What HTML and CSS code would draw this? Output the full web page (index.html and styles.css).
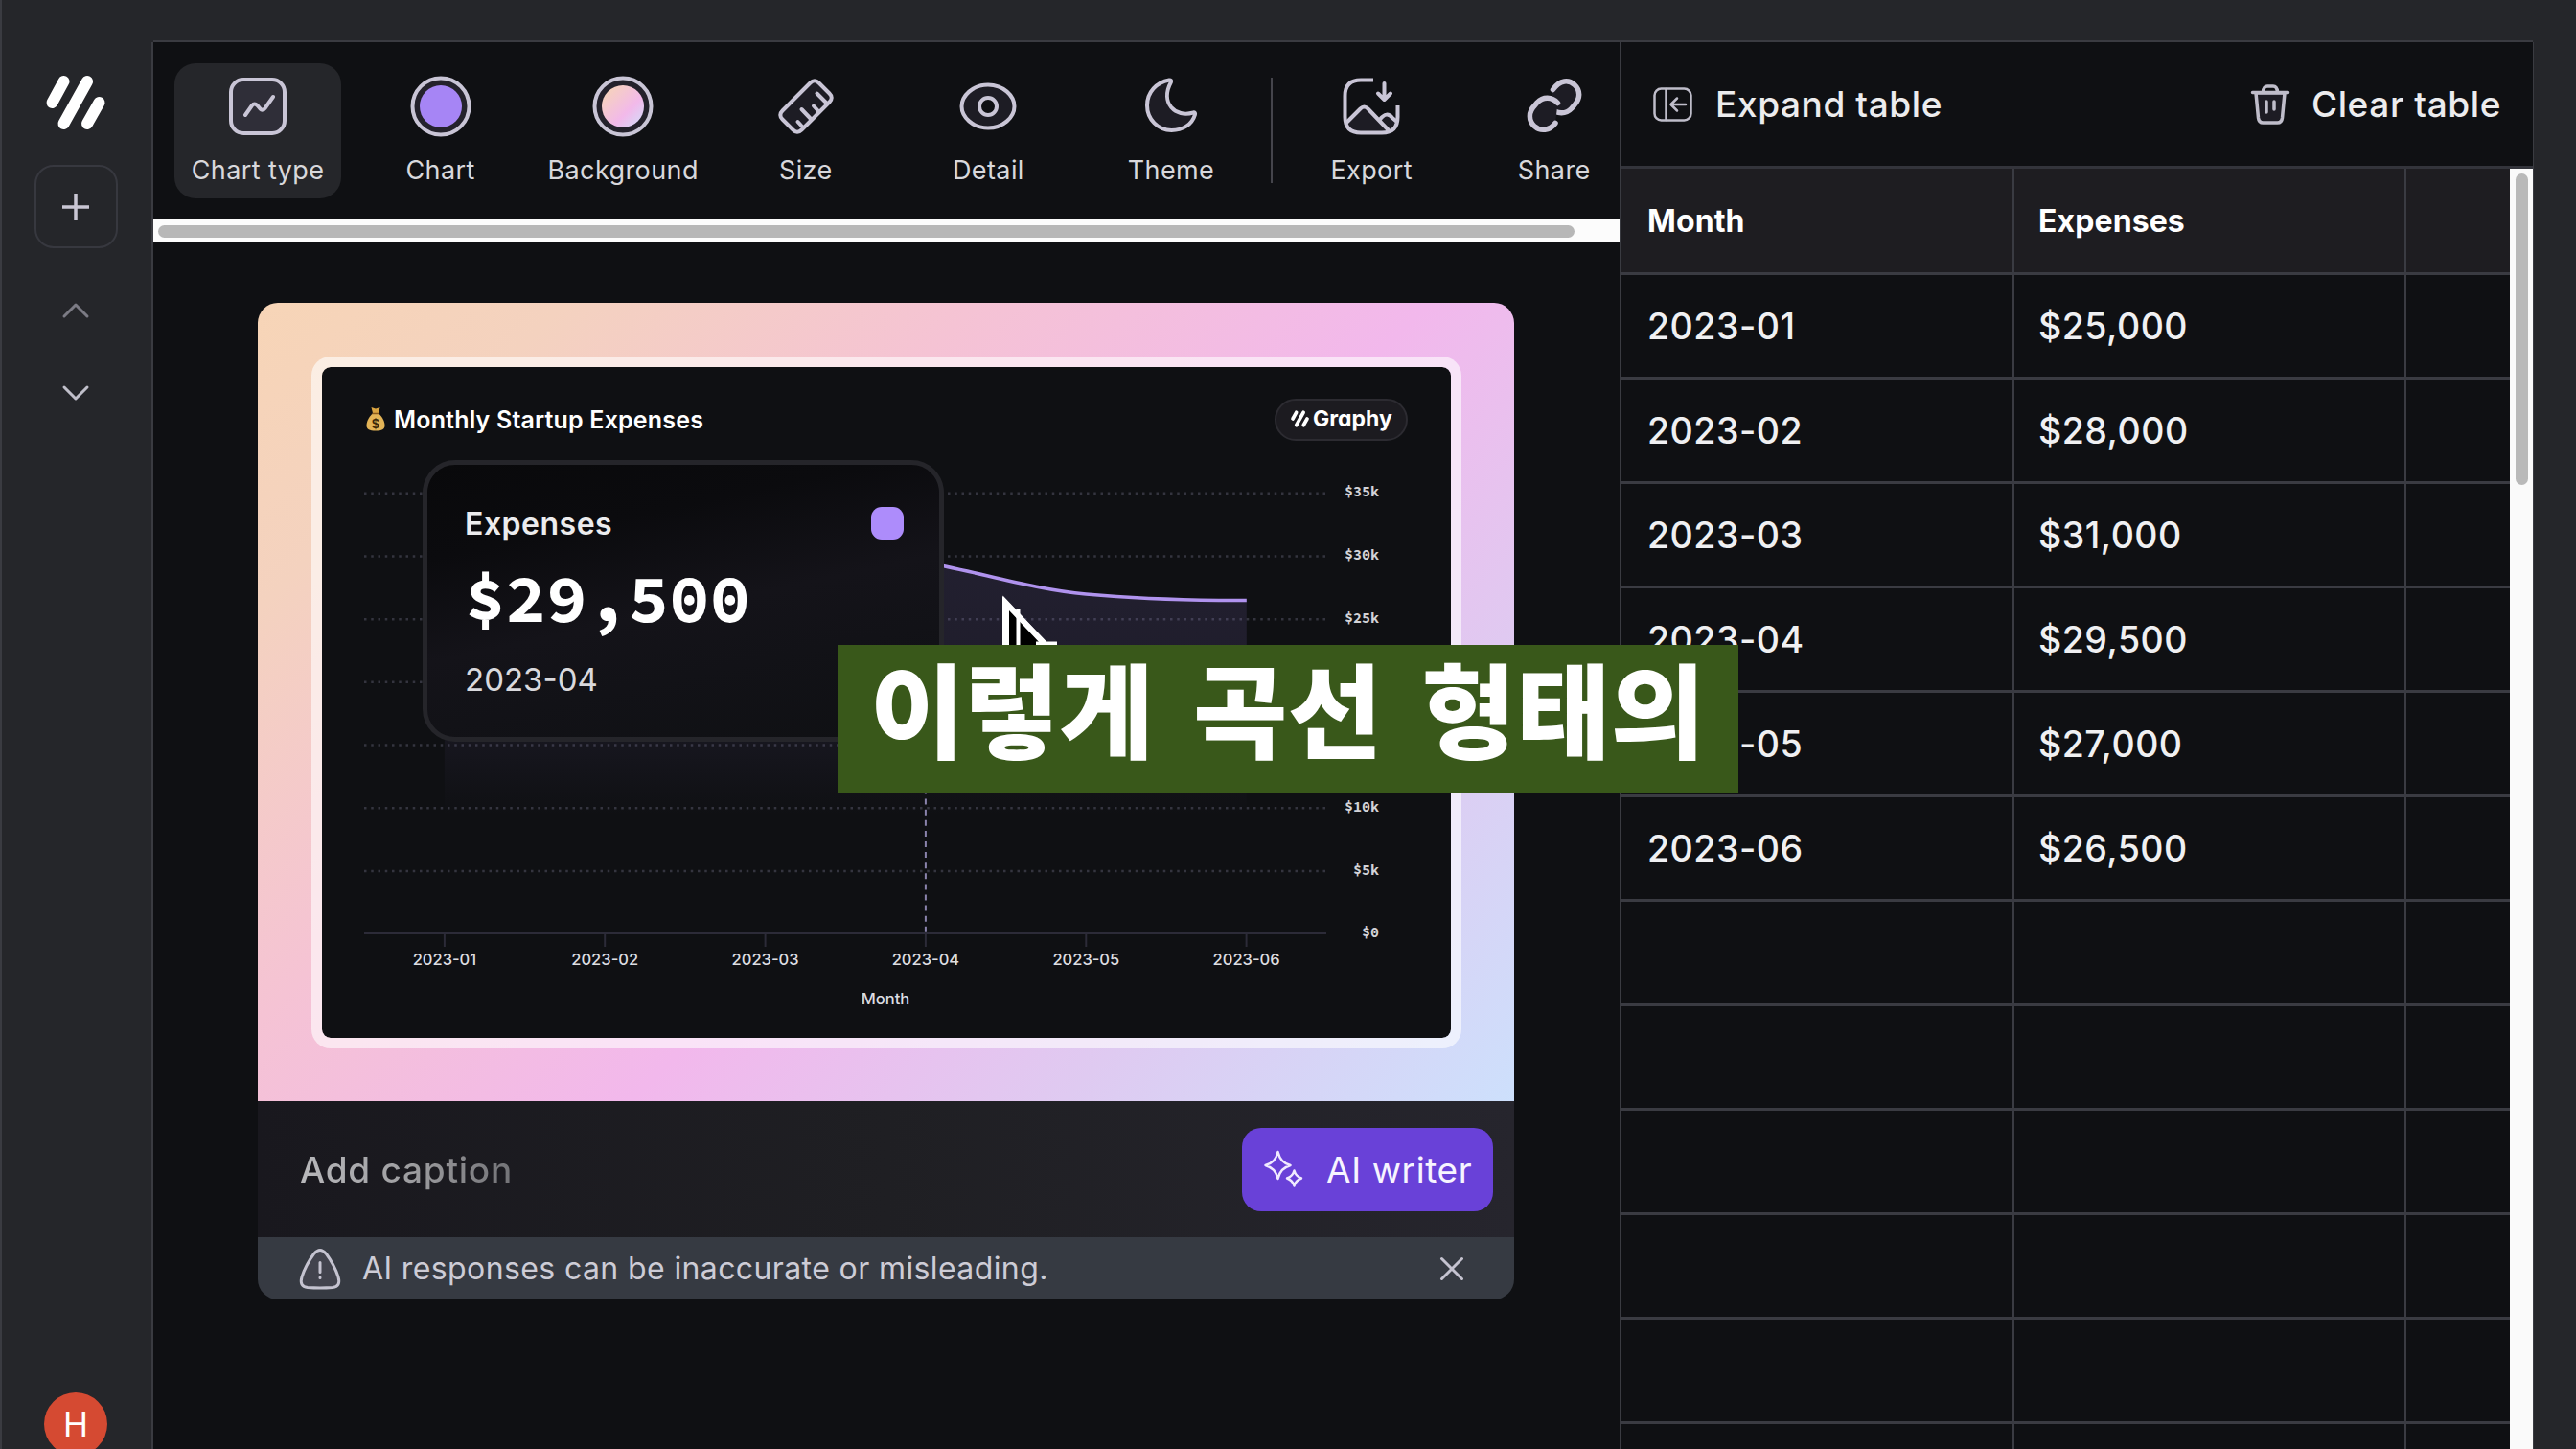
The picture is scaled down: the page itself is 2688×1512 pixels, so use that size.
FILE: index.html
```html
<!DOCTYPE html>
<html lang="en">
<head>
<meta charset="utf-8">
<title>Graphy</title>
<link rel="stylesheet" href="styles.css">
</head>
<body>
<div class="app">
  <nav class="sidebar">
    <svg class="logo" viewBox="0 0 62 58" width="62" height="58"><g stroke="#fff" stroke-width="12" stroke-linecap="round"><path d="M18.500 6 6.500 28"/><path d="M43 6 18.500 50"/><path d="M55.500 28 43 50"/></g></svg>
    <button class="add"><svg viewBox="0 0 30 30" width="30" height="30"><path d="M15 1v28M1 15h28"/></svg></button>
    <svg class="chev chev-up" viewBox="0 0 28 16" width="28" height="16"><path d="M2 14 14 2l12 12"/></svg>
    <svg class="chev chev-down" viewBox="0 0 28 16" width="28" height="16"><path d="M2 2l12 12L26 2"/></svg>
    <div class="avatar"><span>H</span></div>
  </nav>

  <main class="editor">
    <div class="toolbar">
      <button class="tool active">
        <svg viewBox="0 0 64 64" width="64" height="64"><rect x="4" y="4" width="56" height="56" rx="13" fill="#2f2e38"/><path d="M19 41l7-10q2.500-3 5.500 0l3 3.500q2.500 2.500 5-.5L48 22"/></svg>
        <span>Chart type</span>
      </button>
      <button class="tool">
        <svg viewBox="0 0 64 64" width="64" height="64"><circle cx="32" cy="32" r="29.500" fill="#24222c"/><circle cx="32" cy="32" r="22" fill="#a685f5" stroke="none"/></svg>
        <span>Chart</span>
      </button>
      <button class="tool">
        <svg viewBox="0 0 64 64" width="64" height="64"><defs><linearGradient id="sw" x1="0" y1="0" x2="1" y2="1"><stop offset=".1" stop-color="#f6d3bb"/><stop offset=".62" stop-color="#f2b9ea"/><stop offset="1" stop-color="#cfe0fb"/></linearGradient></defs><circle cx="32" cy="32" r="29.500" fill="#24222c"/><circle cx="32" cy="32" r="22" fill="url(#sw)" stroke="none"/></svg>
        <span>Background</span>
      </button>
      <button class="tool">
        <svg viewBox="0 0 64 64" width="64" height="64"><path fill="#1d1c24" d="M36.500 7.500 7.500 36.500q-4.500 4.500 0 9L18.500 56.500q4.500 4.500 9 0l29-29q4.500-4.500 0-9L45.500 7.500q-4.500-4.500-9 0z"/><path d="M29 54l-5.500-6M37.500 45.500l-10-10.500M45.500 37.500l-5.500-6M54 29 43.500 18.500"/></svg>
        <span>Size</span>
      </button>
      <button class="tool">
        <svg viewBox="0 0 64 64" width="64" height="64"><path fill="#1d1c24" d="M32 9.500C48 9.500 59.500 21 59.500 32S48 54.500 32 54.500 4.500 43 4.500 32 16 9.500 32 9.500z"/><circle cx="32" cy="32" r="9" fill="#0f1013"/></svg>
        <span>Detail</span>
      </button>
      <button class="tool">
        <svg viewBox="0 0 64 64" width="64" height="64"><path fill="#1d1c24" d="M30 4.500C17 7 7 17 7 31c0 14.500 11.500 26 25.500 26C44 57 54 51 57 40.500c.5-1.500-.5-2.500-2-2C37 44 20 29 32 6.500c.7-1.300-.3-2.300-2-2z"/></svg>
        <span>Theme</span>
      </button>
      <i class="divider"></i>
      <button class="tool">
        <svg viewBox="0 0 64 64" width="64" height="64"><path fill="#1d1c24" stroke="none" d="M5 48 20 34q3-3 6 0L50 59H20q-11 0-15-11zM41 44q6-8 12 0l5 4-8 9z"/><path stroke-linecap="butt" d="M34 4.500H21Q4.500 4.500 4.500 21v22Q4.500 59.500 21 59.500h22Q59.500 59.500 59.500 43V31"/><path d="M7 48 20.500 34.500q4-4 8 0L50 57M41 45.500q7-9 13-1.500l3.500 3M45.500 8v16M39 18.500l6.500 6.500 6.500-6.500"/></svg>
        <span>Export</span>
      </button>
      <button class="tool">
        <svg class="thick" viewBox="0 0 64 64" width="64" height="64"><path fill="#1d1c24" d="M30.500 14.500C38 4 47 4 53 9.500c6.500 6 6 14.500 0 21l-3 3.500c-6 6.500-15.500 6.500-21.500-.5"/><path fill="#1d1c24" d="M35.500 28.500c-6-7-15.500-7-21.500-.5l-2.500 3c-7 7-6.500 15.500-.5 21.500 6.500 6 16 5 22-3"/></svg>
        <span>Share</span>
      </button>
    </div>
    <div class="hscroll"><i></i></div>

    <section class="card">
      <div class="canvas">
        <div class="chart">
          <header class="chart-head">
            <svg class="bag" viewBox="0 0 20 26" width="20" height="26"><path fill="#d9a441" d="M5.500 1 10 2.500 14.500 1 13 7H7z"/><path fill="#e3b457" d="M7 7.500h6c4 3.500 6.500 8 6.500 12.500 0 4-3 5.500-9.500 5.500S.5 24 .5 20C.5 15.500 3 11 7 7.500z"/><path stroke="#8a5a1c" stroke-width="1.600" d="M6.500 7.500h7"/><text x="10" y="22.500" text-anchor="middle">$</text></svg>
            <h1>Monthly Startup Expenses</h1>
            <div class="brand"><svg viewBox="0 0 62 58" width="19" height="18"><g stroke="#fff" stroke-width="12" stroke-linecap="round"><path d="M18.500 7 6.500 29"/><path d="M43 7 18.500 51"/><path d="M55.500 29 43 51"/></g></svg><span>Graphy</span></div>
          </header>
          <svg class="plot" viewBox="336 483 1178 600" width="1178" height="600">
            <defs><linearGradient id="area" x1="0" y1="0" x2="0" y2="1"><stop offset="0" stop-color="#a58af5" stop-opacity=".13"/><stop offset=".3" stop-color="#a58af5" stop-opacity=".11"/><stop offset=".62" stop-color="#a58af5" stop-opacity=".02"/><stop offset=".7" stop-color="#a58af5" stop-opacity="0"/></linearGradient></defs>
            <g class="grid"><path d="M380 514.800h1006M380 580.500h1006M380 646.200h1006M380 711.800h1006M380 777.500h1006M380 843.200h1006M380 908.900h1006"/></g>
            <path fill="url(#area)" d="M463.900 646C520 633 575 619 631 607S742 567 798.600 567 910 577 965.800 587s112 28 167.500 33 112 6.600 167.500 6.600V974H463.900z"/>
            <path class="line" d="M463.900 646C520 633 575 619 631 607S742 567 798.600 567 910 577 965.800 587s112 28 167.500 33 112 6.600 167.500 6.600"/>
            <path class="axis" d="M380 974h1004M463.900 974v14M631.200 974v14M798.600 974v14M965.900 974v14M1133.300 974v14M1300.600 974v14"/>
            <path class="marker" d="M965.900 822.500V974"/>
            <g class="xl"><text x="463.900" y="1007">2023-01</text><text x="631.200" y="1007">2023-02</text><text x="798.600" y="1007">2023-03</text><text x="965.900" y="1007">2023-04</text><text x="1133.300" y="1007">2023-05</text><text x="1300.600" y="1007">2023-06</text><text x="924" y="1048">Month</text></g>
            <g class="yl"><text x="1439" y="518">$35k</text><text x="1439" y="584">$30k</text><text x="1439" y="650">$25k</text><text x="1439" y="847">$10k</text><text x="1439" y="913">$5k</text><text x="1439" y="978">$0</text></g>
          </svg>
          <div class="tip">
            <div class="tip-head"><b>Expenses</b><i></i></div>
            <strong>$29,500</strong>
            <small>2023-04</small>
          </div>
        </div>
      </div>
      <div class="caption">
        <span class="ph">Add caption</span>
        <button class="ai"><svg viewBox="0 0 42 40" width="42" height="40"><path d="M15.500 2c2 8 5.500 11.500 13 14-7.500 2.500-11 6-13 14-2-8-5.500-11.500-13-14 7.500-2.500 11-6 13-14zM32.500 21.500c1.200 4.500 3.300 6.500 7.500 8-4.200 1.500-6.300 3.500-7.500 8-1.200-4.500-3.300-6.500-7.500-8 4.200-1.500 6.300-3.500 7.500-8z"/></svg><span>AI writer</span></button>
      </div>
      <div class="notice">
        <svg viewBox="0 0 44 44" width="44" height="44"><path fill="#42434d" d="M15.500 6.500q6.500-8 13 0Q37 18 41 30.500q3 10-6 11-13 1-26 0-9-1-6-11Q7 18 15.500 6.500z"/><path d="M22 15.500v10M22 31v.5"/></svg>
        <span>AI responses can be inaccurate or misleading.</span>
        <svg class="close" viewBox="0 0 26 26" width="26" height="26"><path d="M2.500 2.500l21 21M23.500 2.500l-21 21"/></svg>
      </div>
    </section>
  </main>

  <aside class="panel">
    <header class="panel-head">
      <svg viewBox="0 0 42 36" width="42" height="36"><rect x="1.500" y="1.500" width="38" height="33" rx="7" /><path d="M13.500 2v32M34 18H19M25 11.500 18.500 18l6.500 6.500"/></svg>
      <span>Expand table</span>
      <svg class="trash" viewBox="0 0 40 42" width="40" height="42"><path fill="#1d1c24" d="M5 9l2.500 26q.6 5 5 5h15q4.400 0 5-5L35 9z"/><path d="M1.500 8.500h37M12.500 8q.5-6 4.500-6h6q4 0 4.500 6M16 18v11M24 18v8"/></svg>
      <span>Clear table</span>
    </header>
    <div class="table-wrap">
      <div class="table">
        <div class="th">Month</div><div class="th">Expenses</div><div class="th"></div>
        <div>2023-01</div><div>$25,000</div><div></div>
        <div>2023-02</div><div>$28,000</div><div></div>
        <div>2023-03</div><div>$31,000</div><div></div>
        <div>2023-04</div><div>$29,500</div><div></div>
        <div>2023-05</div><div>$27,000</div><div></div>
        <div>2023-06</div><div>$26,500</div><div></div>
        <div></div><div></div><div></div>
        <div></div><div></div><div></div>
        <div></div><div></div><div></div>
        <div></div><div></div><div></div>
        <div></div><div></div><div></div>
        <div></div><div></div><div></div>
      </div>
      <div class="vscroll"><i></i></div>
    </div>
  </aside>
</div>
<svg class="cursor" viewBox="0 0 60 84" width="60" height="84"><path fill="#000" stroke="#fff" stroke-width="6" d="M3.500 7v70l50-17z"/><path fill="#fff" d="M0 0v80l7-9V14l50 45L0 0z"/><path stroke="#fff" stroke-width="4" d="M16.500 14v60M35 49.500h22"/></svg>
<div class="subtitle"><span lang="ko">이렇게 곡선 형태의</span></div>
</body>
</html>
```
FILE: styles.css
```css
* { box-sizing: border-box; }
body { margin: 0; width: 2688px; height: 1512px; overflow: hidden; position: relative; background: #25262a; font-family: Inter, "Noto Sans", sans-serif; color: #f2f2f4; }
button { border: 0; background: none; padding: 0; font: inherit; color: inherit; }
svg { display: block; flex: none; fill: none; overflow: visible; }
.app { display: grid; grid-template-columns: 158px 1530px 953px; height: 1512px; padding-top: 44px; border-left: 2px solid #3a3b41; }

/* sidebar */
.sidebar { display: flex; flex-direction: column; align-items: center; padding: 35px 2px 0 0; border-right: 2px solid #3a3b41; height: 1468px; overflow: hidden; }
.add { flex: none; width: 87px; height: 87px; margin-top: 35px; border: 2px solid #37383f; border-radius: 20px; display: grid; place-items: center; }
.add path { stroke: #c9c6d4; stroke-width: 3.5; }
.chev { stroke-width: 3; stroke-linecap: round; stroke-linejoin: round; }
.chev-up { margin-top: 57px; stroke: #7c7b85; }
.chev-down { margin-top: 70px; stroke: #c0bfca; }
.avatar { flex: none; width: 66px; height: 66px; margin-top: 1035px; border-radius: 50%; background: #d54a32; display: grid; place-items: center; font-size: 35px; color: #fff; }

/* editor */
.editor { background: #0f1013; box-shadow: 0 -2px #3a3b41; min-width: 0; }
.toolbar { height: 185px; padding: 22px 0 0 22px; display: flex; gap: 16.600px; overflow: hidden; }
.tool { flex: none; width: 174px; height: 141px; border-radius: 22px; display: flex; flex-direction: column; align-items: center; padding-top: 13px; }
.tool.active { background: #25262a; }
.tool svg { stroke: #c9c5d6; stroke-width: 4; stroke-linecap: round; stroke-linejoin: round; }
.tool svg.thick { stroke-width: 5.5; }
.tool span { margin-top: 19px; font-size: 27px; letter-spacing: .4px; line-height: 32px; color: #d8d8dc; white-space: nowrap; }
.divider { flex: none; width: 2px; height: 110px; margin-top: 15px; background: #45454c; }
.hscroll { height: 23px; background: #fcfcfc; padding: 6px 47px 4px 5px; }
.hscroll i { display: block; height: 13px; border-radius: 7px; background: #b7b7b7; }

.card { width: 1311px; margin: 64px 0 0 109px; border-radius: 21px; overflow: hidden; }
.canvas { height: 833px; padding: 56px; background: linear-gradient(135deg, #f7d5b7 0%, #f4d2bf 15%, #f5c3d4 35%, #f2b8ec 57%, #dfcaf1 78%, #cde0fc 100%); }
.chart { position: relative; width: 1200px; height: 722px; border: 11px solid rgba(255,255,255,.6); border-radius: 20px; background: #0f1013; background-clip: padding-box; }
.chart-head { height: 100px; padding: 33px 45px 0 46px; display: flex; align-items: flex-start; }
.bag { margin-top: 8px; }
.bag text { font: bold 14px "Liberation Sans", sans-serif; fill: #3a2708; }
.chart h1 { margin: 7px auto 0 9px; font-size: 25px; line-height: 30px; font-weight: 600; letter-spacing: .18px; color: #fff; white-space: nowrap; }
.brand { width: 139px; height: 44px; border: 2px solid #2c2b31; border-radius: 22px; background: #1c1b20; display: flex; align-items: center; gap: 4px; padding: 0 0 2px 15px; font-size: 23px; font-weight: 700; color: #fff; font-feature-settings: "cv11"; }
.grid { stroke: #34343f; stroke-width: 2.500; stroke-dasharray: 2.500 4.750; }
.line { stroke: #b093ee; stroke-width: 3.500; }
.axis { stroke: #2c2b38; stroke-width: 2; }
.marker { stroke: #8a83ac; stroke-width: 2; stroke-dasharray: 6 5.100; }
.xl text { font-size: 16.500px; font-weight: 500; fill: #dedee2; text-anchor: middle; }
.yl text { font: 700 15px "Source Code Pro", "Liberation Mono", monospace; fill: #d2d2d6; text-anchor: end; }
.tip { position: absolute; left: 105px; top: 97px; width: 544px; height: 294px; border: 5px solid #25252a; border-radius: 34px; background: linear-gradient(168deg, #09090b 0%, #0b0b0e 25%, #141319 52%, #121217 70%, #0f1013 100%); padding: 43px 37px 0 39px; display: flex; flex-direction: column; }
.tip-head { display: flex; justify-content: space-between; height: 36px; align-items: center; }
.tip b { font-size: 32px; font-weight: 600; letter-spacing: .5px; color: #ececee; }
.tip-head i { width: 34px; height: 34px; border-radius: 11px; background: #ad8cfb; }
.tip strong { font: bold 71px/80px "Source Code Pro", "Liberation Mono", monospace; color: #fff; margin-top: 20px; }
.tip small { font-size: 33px; line-height: 40px; color: #d9d9dd; margin-top: 25px; }

.caption { height: 142px; padding: 0 22px 0 44px; display: flex; align-items: center; justify-content: space-between; background: linear-gradient(90deg, #19181e, #1f1f23 50%, #26252d); }
.ph { font-size: 37px; font-weight: 500; letter-spacing: .75px; color: transparent; background: linear-gradient(90deg, #b8b8bb, #9f9fa2 50%, #737377); background-clip: text; -webkit-background-clip: text; }
.ai { width: 262px; height: 87px; border-radius: 20px; background: #6941d8; display: flex; align-items: center; gap: 24px; padding-left: 22px; font-size: 37px; letter-spacing: .6px; color: #f7f4ff; white-space: nowrap; }
.ai svg { stroke: #f0eaff; stroke-width: 2.500; stroke-linejoin: round; }
.notice { height: 65px; padding: 0 52px 0 43px; display: flex; align-items: center; background: #363a42; font-size: 32px; letter-spacing: .39px; color: #cdccd6; }
.notice svg { stroke: #c5c3d0; stroke-width: 3; stroke-linecap: round; }
.notice span { margin: 0 auto 0 22px; white-space: nowrap; }

/* table panel */
.panel { background: #0f1013; border-left: 2px solid #3a3b41; box-shadow: 0 -2px #3a3b41, 1px 0 #3a3b41; height: 1468px; }
.panel-head { height: 132px; border-bottom: 3px solid #33343b; padding: 0 33px; display: flex; align-items: center; font-size: 37px; font-weight: 450; letter-spacing: .6px; color: #ececee; }
.panel-head svg { stroke: #bfbdca; stroke-width: 2.500; stroke-linecap: round; stroke-linejoin: round; }
.panel-head .trash { margin-left: auto; stroke-width: 3.500; }
.panel-head span { margin-left: 23px; white-space: nowrap; }
.table-wrap { display: grid; grid-template-columns: 1fr 24px; height: 1336px; overflow: hidden; }
.table { display: grid; grid-template-columns: 410px 409px 1fr; grid-template-rows: 111px; grid-auto-rows: 109px; font-size: 37.500px; font-weight: 450; letter-spacing: .5px; color: #f0f0f2; }
.table div { border-right: 2px solid #3a3b42; border-bottom: 3px solid #3a3b42; padding-left: 27px; display: flex; align-items: center; }
.table div:nth-child(3n+2) { padding-left: 25px; }
.table div:nth-child(3n) { border-right: 0; }
.table .th { background: #1e1d21; font-size: 32px; font-weight: 700; letter-spacing: .1px; color: #fff; }
.vscroll { background: #fafafa; padding: 5px 5px 0 6px; }
.vscroll i { display: block; height: 325px; border-radius: 7px; background: #b9b9b9; }

/* overlays */
.cursor { position: absolute; left: 1046px; top: 622px; }
.subtitle { position: absolute; left: 874px; top: 673px; width: 940px; height: 154px; background: #39581a; overflow: hidden; padding-left: 34px; white-space: nowrap; font: 900 107px/127px "Noto Sans CJK KR", sans-serif; letter-spacing: .2px; word-spacing: 11px; color: #fff; }
```
